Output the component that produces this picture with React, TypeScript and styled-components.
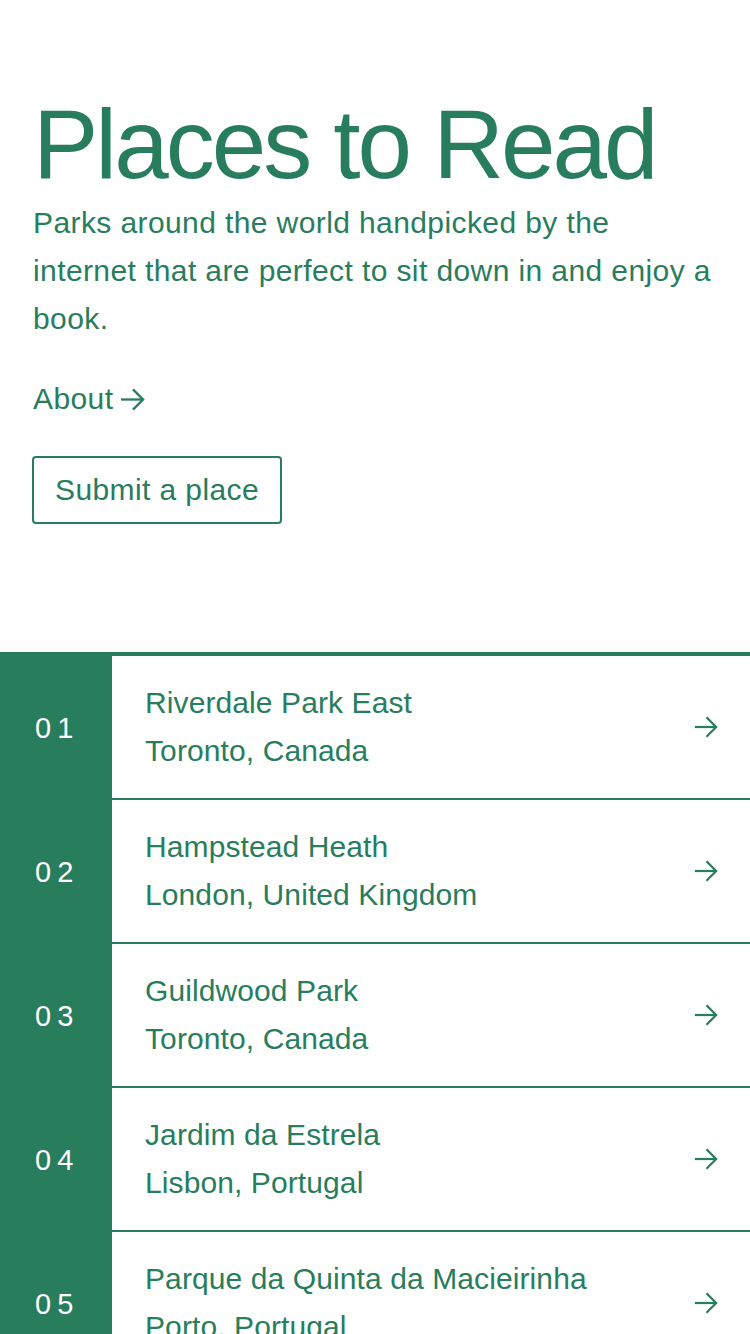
import React from 'react';
import styled, { createGlobalStyle } from 'styled-components';

const green = '#287d5c';

const GlobalStyle = createGlobalStyle`
  * { box-sizing: border-box; }
  body {
    margin: 0;
    background: #fff;
    font-family: 'Liberation Sans', Arial, sans-serif;
    color: ${green};
  }
`;

const Hero = styled.header`
  padding: 95px 32px 128px 33px;
`;

const Title = styled.h1`
  margin: 0;
  font-size: 98px;
  line-height: 1;
  font-weight: 400;
  letter-spacing: -3px;
`;

const Intro = styled.p`
  margin: 6px 0 0;
  font-size: 30px;
  line-height: 48px;
  letter-spacing: 0.4px;
`;

const AboutLink = styled.a`
  display: inline-flex;
  align-items: center;
  gap: 7px;
  margin-top: 32px;
  font-size: 30px;
  line-height: 48px;
  letter-spacing: 0.4px;
  color: ${green};
  text-decoration: none;
`;

const SubmitButton = styled.button`
  display: block;
  margin: 33px 0 0 -1px;
  height: 68px;
  padding: 0 21px;
  border: 2px solid ${green};
  border-radius: 4px;
  background: #fff;
  color: ${green};
  font-family: 'Liberation Sans', Arial, sans-serif;
  font-size: 30px;
  letter-spacing: 0.4px;
`;

const List = styled.ol`
  list-style: none;
  margin: 0;
  padding: 0;
  border-top: 4px solid ${green};
`;

const Row = styled.li`
  display: grid;
  grid-template-columns: 112px 1fr;
  height: 144px;
`;

const Number = styled.div`
  background: ${green};
  color: #fff;
  display: flex;
  align-items: center;
  padding-left: 35px;
  font-size: 29px;
  letter-spacing: 6px;
`;

const Content = styled.a`
  display: flex;
  align-items: center;
  justify-content: space-between;
  padding: 0 32px 0 33px;
  border-bottom: 2px solid ${green};
  color: ${green};
  text-decoration: none;
`;

const Text = styled.div`
  font-size: 30px;
  line-height: 48px;
  letter-spacing: 0.1px;
`;

const Arrow = ({ size = 26 }: { size?: number }) => (
  <svg width={size} height={size} viewBox="0 0 26 26" fill="none" stroke={green} strokeWidth="2.4">
    <path d="M1 13h23" />
    <path d="M13.5 2.5L24 13 13.5 23.5" />
  </svg>
);

const places = [
  { name: 'Riverdale Park East', city: 'Toronto, Canada' },
  { name: 'Hampstead Heath', city: 'London, United Kingdom' },
  { name: 'Guildwood Park', city: 'Toronto, Canada' },
  { name: 'Jardim da Estrela', city: 'Lisbon, Portugal' },
  { name: 'Parque da Quinta da Macieirinha', city: 'Porto, Portugal' },
  { name: 'Parc des Buttes-Chaumont', city: 'Paris, France' },
];

export default function App() {
  return (
    <>
      <GlobalStyle />
      <Hero>
        <Title>Places to Read</Title>
        <Intro>
          Parks around the world handpicked by the internet that are perfect to sit down in and enjoy a book.
        </Intro>
        <AboutLink href="#">
          About <Arrow size={25} />
        </AboutLink>
        <SubmitButton>Submit a place</SubmitButton>
      </Hero>
      <List>
        {places.map((p, i) => (
          <Row key={p.name}>
            <Number>{String(i + 1).padStart(2, '0')}</Number>
            <Content href="#">
              <Text>
                {p.name}
                <br />
                {p.city}
              </Text>
              <Arrow size={24} />
            </Content>
          </Row>
        ))}
      </List>
    </>
  );
}
